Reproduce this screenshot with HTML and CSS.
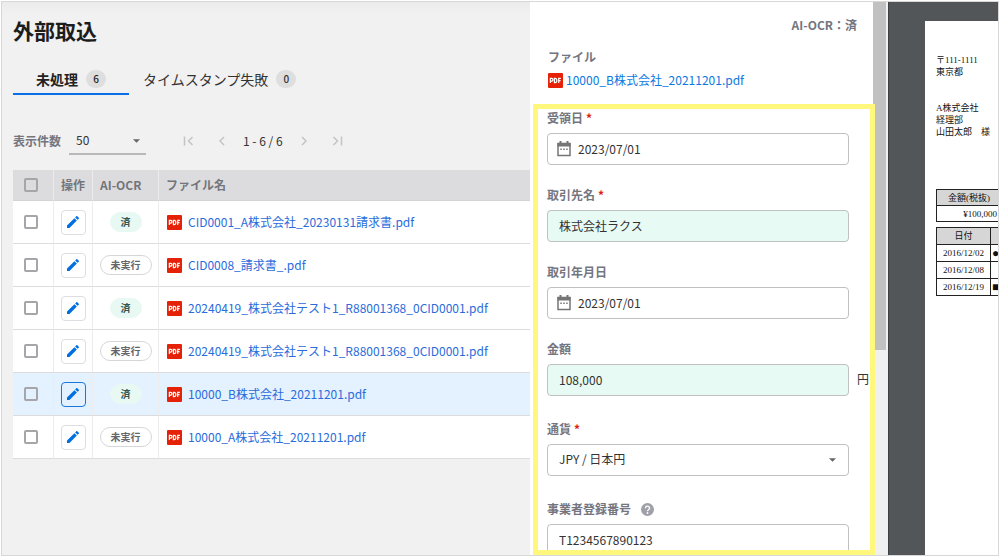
FILE: index.html
```html
<!DOCTYPE html>
<html lang="ja">
<head>
<meta charset="utf-8">
<title>外部取込</title>
<link rel="stylesheet" href="styles.css">
</head>
<body>
<svg class="defs" aria-hidden="true">
  <symbol id="pencil" viewBox="0 0 24 24"><path d="M3 17.2V21h3.8L17.800 9.900l-3.700-3.700L3 17.200zM20.700 7c.4-.4.4-1 0-1.400l-2.300-2.300c-.4-.4-1-.4-1.400 0l-1.800 1.800 3.700 3.700L20.700 7z"/></symbol>
  <symbol id="pdf" viewBox="0 0 14 14"><rect width="14" height="14" rx="1" fill="#e52207"/><path d="M2.200 9.300V5h1.200a1.200 1.200 0 0 1 0 2.500H2.200M6 5v4h.7a1.600 1.600 0 0 0 1.500-2A1.600 1.600 0 0 0 6.700 5zM10 9.300V5h2M10 7.100h1.700" fill="none" stroke="#fff" stroke-width="1.100"/></symbol>
  <symbol id="calendar" viewBox="0 0 16 16"><path d="M2 2.500h12v12H2z" fill="none" stroke="#757575" stroke-width="1.500"/><path d="M1.500 2h13v3.500h-13zM3.500 0h2v3h-2zM10.500 0h2v3h-2zM4.300 7.500h1.500v1.500H4.300zM7.200 7.500h1.500v1.500H7.200zM10.200 7.500h1.500v1.500h-1.500z" fill="#757575"/></symbol>
</svg>
<div class="app">
  <main class="list">
    <h1 class="title">外部取込</h1>
    <nav class="tabs">
      <button class="tab tab-active" type="button">未処理<span class="count">6</span></button>
      <button class="tab" type="button">タイムスタンプ失敗<span class="count">0</span></button>
    </nav>
    <div class="pager">
      <label class="caption" for="per-page">表示件数</label>
      <div class="select-box per-page">
        <select id="per-page"><option>50</option></select>
        <svg class="caret" viewBox="0 0 8 4"><path d="M0 0h8L4 4z"/></svg>
      </div>
      <div class="pages">
        <button class="page-btn" type="button" aria-label="最初"><svg viewBox="0 0 12 12"><path d="M1.500 1.500v9M9.500 2L5.500 6l4 4"/></svg></button>
        <button class="page-btn" type="button" aria-label="前"><svg viewBox="0 0 12 12"><path d="M8 2L4 6l4 4"/></svg></button>
        <span class="range">1 - 6 / 6</span>
        <button class="page-btn" type="button" aria-label="次"><svg viewBox="0 0 12 12"><path d="M4 2l4 4-4 4"/></svg></button>
        <button class="page-btn" type="button" aria-label="最後"><svg viewBox="0 0 12 12"><path d="M2.500 2l4 4-4 4M10.500 1.500v9"/></svg></button>
      </div>
    </div>
    <table class="files">
      <thead>
        <tr><th class="col-check"><input type="checkbox" aria-label="すべて選択"></th><th class="col-edit">操作</th><th class="col-ocr">AI-OCR</th><th>ファイル名</th></tr>
      </thead>
      <tbody>
        <tr>
          <td class="mid"><input type="checkbox" aria-label="選択"></td>
          <td class="mid"><button class="edit" type="button" aria-label="編集"><svg><use href="#pencil"/></svg></button></td>
          <td class="mid"><span class="pill pill-done">済</span></td>
          <td><a class="file" href="#"><svg><use href="#pdf"/></svg>CID0001_A株式会社_20230131請求書.pdf</a></td>
        </tr>
        <tr>
          <td class="mid"><input type="checkbox" aria-label="選択"></td>
          <td class="mid"><button class="edit" type="button" aria-label="編集"><svg><use href="#pencil"/></svg></button></td>
          <td class="mid"><span class="pill">未実行</span></td>
          <td><a class="file" href="#"><svg><use href="#pdf"/></svg>CID0008_請求書_.pdf</a></td>
        </tr>
        <tr>
          <td class="mid"><input type="checkbox" aria-label="選択"></td>
          <td class="mid"><button class="edit" type="button" aria-label="編集"><svg><use href="#pencil"/></svg></button></td>
          <td class="mid"><span class="pill pill-done">済</span></td>
          <td><a class="file" href="#"><svg><use href="#pdf"/></svg>20240419_株式会社テスト1_R88001368_0CID0001.pdf</a></td>
        </tr>
        <tr>
          <td class="mid"><input type="checkbox" aria-label="選択"></td>
          <td class="mid"><button class="edit" type="button" aria-label="編集"><svg><use href="#pencil"/></svg></button></td>
          <td class="mid"><span class="pill">未実行</span></td>
          <td><a class="file" href="#"><svg><use href="#pdf"/></svg>20240419_株式会社テスト1_R88001368_0CID0001.pdf</a></td>
        </tr>
        <tr class="selected">
          <td class="mid"><input type="checkbox" aria-label="選択"></td>
          <td class="mid"><button class="edit" type="button" aria-label="編集"><svg><use href="#pencil"/></svg></button></td>
          <td class="mid"><span class="pill pill-done">済</span></td>
          <td><a class="file" href="#"><svg><use href="#pdf"/></svg>10000_B株式会社_20211201.pdf</a></td>
        </tr>
        <tr>
          <td class="mid"><input type="checkbox" aria-label="選択"></td>
          <td class="mid"><button class="edit" type="button" aria-label="編集"><svg><use href="#pencil"/></svg></button></td>
          <td class="mid"><span class="pill">未実行</span></td>
          <td><a class="file" href="#"><svg><use href="#pdf"/></svg>10000_A株式会社_20211201.pdf</a></td>
        </tr>
      </tbody>
    </table>
  </main>

  <section class="panel">
    <div class="status caption">AI-OCR：済</div>
    <div class="source">
      <div class="caption">ファイル</div>
      <a class="file file-open" href="#"><svg><use href="#pdf"/></svg>10000_B株式会社_20211201.pdf</a>
    </div>
    <form class="form">
      <div class="field">
        <label class="caption" for="received">受領日<span class="required">*</span></label>
        <div class="control"><svg class="cal"><use href="#calendar"/></svg><input id="received" class="with-icon" type="text" value="2023/07/01"></div>
      </div>
      <div class="field">
        <label class="caption" for="partner">取引先名<span class="required">*</span></label>
        <div class="control"><input id="partner" class="read" type="text" value="株式会社ラクス"></div>
      </div>
      <div class="field">
        <label class="caption" for="date">取引年月日</label>
        <div class="control"><svg class="cal"><use href="#calendar"/></svg><input id="date" class="with-icon" type="text" value="2023/07/01"></div>
      </div>
      <div class="field">
        <label class="caption" for="amount">金額</label>
        <div class="control"><input id="amount" class="read" type="text" value="108,000"><span class="unit">円</span></div>
      </div>
      <div class="field spaced">
        <label class="caption" for="currency">通貨<span class="required">*</span></label>
        <div class="control select-box"><select id="currency"><option>JPY / 日本円</option></select><svg class="caret" viewBox="0 0 8 4"><path d="M0 0h8L4 4z"/></svg></div>
      </div>
      <div class="field spaced">
        <label class="caption" for="number">事業者登録番号<svg class="help" viewBox="0 0 13 13"><circle cx="6.500" cy="6.500" r="6.500" fill="#a0a1a8"/><path d="M4.500 5.200a2 2 0 1 1 3 1.600c-.7.500-1 .8-1 1.500" fill="none" stroke="#fff" stroke-width="1.300"/><circle cx="6.500" cy="10" r=".9" fill="#fff"/></svg></label>
        <div class="control"><input id="number" type="text" value="T1234567890123"></div>
      </div>
    </form>
  </section>
  <div class="scrollbar"><div class="thumb"></div></div>

  <aside class="viewer">
    <article class="sheet">
      <p>〒111-1111<br>東京都</p>
      <p class="addressee">A株式会社<br>経理部<br>山田太郎　様</p>
      <table class="bill total">
        <tr><th>金額(税抜)</th></tr>
        <tr><td>¥100,000</td></tr>
      </table>
      <table class="bill">
        <tr><th class="day">日付</th><th></th></tr>
        <tr><td>2016/12/02</td><td>●</td></tr>
        <tr><td>2016/12/08</td><td></td></tr>
        <tr><td>2016/12/19</td><td>■</td></tr>
      </table>
    </article>
  </aside>
</div>
</body>
</html>
```

FILE: styles.css
```css
* { box-sizing: border-box; }
body {
  margin: 0;
  padding: 1px;
  height: 100vh;
  font: 12px/18px "Noto Sans CJK JP", sans-serif;
  color: #333;
  background: #fff;
}
button, input, select { font: inherit; color: inherit; margin: 0; }
button { background: none; border: 0; padding: 0; }
h1, p { margin: 0; }
.defs { position: absolute; width: 0; height: 0; }

.app {
  display: grid;
  grid-template-columns: minmax(0, 1fr) 343px 15px 110px;
  grid-template-rows: minmax(0, 1fr);
  height: 100%;
  border: 1px solid #d8d8d8;
  overflow: hidden;
}
.caption { font-weight: 700; color: #74757f; }

/* File list */
.list {
  padding: 14px 0 0 11px;
  background: linear-gradient(#ebebec, #f1f1f1 12px);
  overflow: hidden;
}
.title { font-size: 21px; line-height: 28px; font-weight: 700; color: #1c1c1c; }
.tabs { display: flex; margin-top: 20px; }
.tab {
  display: flex;
  align-items: center;
  gap: 8px;
  height: 31px;
  padding: 0 14px;
  font-size: 14px;
  border-bottom: 2px solid transparent;
}
.tab-active { padding: 0 23px; font-weight: 700; color: #222; border-color: #0b6fe8; }
.count {
  width: 20px;
  border-radius: 9px;
  background: #dedede;
  font-size: 10px;
  font-weight: 500;
  text-align: center;
}
.pager { display: flex; align-items: center; margin-top: 32px; height: 28px; }
.select-box { position: relative; }
.select-box select { appearance: none; width: 100%; border-radius: 0; background: none; outline: 0; }
.caret { position: absolute; top: 50%; right: 6px; width: 7px; height: 4px; margin-top: -2px; fill: #666; }
.per-page { width: 77px; margin-left: 8px; }
.per-page select { height: 28px; padding: 0 7px; border: 0; border-bottom: 2px solid #b9b9b9; }
.pages { display: flex; align-items: center; margin-left: 26px; }
.page-btn { display: grid; place-items: center; width: 33px; height: 24px; }
.page-btn svg { width: 12px; height: 12px; fill: none; stroke: #c4c4c4; stroke-width: 1.5; }
.range { padding: 0 5px; white-space: nowrap; }

.files { width: 100%; margin-top: 15px; border-collapse: separate; border-spacing: 0; table-layout: fixed; background: #fff; }
.files th { height: 31px; padding: 0 7px; background: #dcdcde; color: #74757b; font-weight: 700; text-align: left; border-bottom: 1px solid #d4d4d6; }
.files td { height: 43px; padding: 0 8px; border-bottom: 1px solid #dcdcde; }
.files th + th, .files td + td { border-left: 1px solid #ececee; }
.files .col-check { width: 40px; padding: 0 11px; }
.files .col-edit { width: 39px; }
.files .col-ocr { width: 66px; }
.files .mid { padding: 0; text-align: center; }
.files .selected td { background: #e4f1fe; }
.files input {
  appearance: none;
  display: block;
  width: 14px;
  height: 14px;
  border: 2px solid #a5a5aa;
  border-radius: 2px;
}
.files .mid input { margin: 0 11px; }
.edit { display: grid; place-items: center; width: 25px; height: 25px; margin: 0 auto; border: 1px solid #dedee2; border-radius: 4px; background: #fff; }
.edit svg { width: 16px; height: 16px; fill: #0070e0; }
.selected .edit { border-color: #1a78dc; background: none; }
.pill {
  display: inline-block;
  padding: 0 10px;
  border: 1px solid #d6d6d8;
  border-radius: 11px;
  font-size: 10px;
  font-weight: 700;
  color: #65666c;
  vertical-align: middle;
}
.pill-done { border-color: #e8f9f3; background: #e8f9f3; color: #35544e; }
.file { display: flex; align-items: center; gap: 6px; color: #2a6cdb; text-decoration: none; white-space: nowrap; }
.file svg { width: 15px; height: 15px; flex: none; }

/* Detail panel */
.panel { display: flex; flex-direction: column; padding-top: 14px; background: #fff; }
.status { padding-right: 16px; text-align: right; }
.source { margin-top: 14px; padding-left: 18px; }
.file-open { margin-top: 5px; gap: 3px; color: #0b79e0; }
.form {
  position: relative;
  flex: 1;
  min-height: 0;
  margin: 15px -2px 0 3px;
  padding: 0 21px 0 9px;
  border: 5px solid #fff87c;
  overflow: hidden;
}
.field { margin-bottom: 21px; }
.spaced { margin-top: 24px; }
.field label { display: flex; align-items: center; }
.required { margin-left: 3px; color: #e02010; }
.help { width: 13px; height: 13px; margin-left: 10px; }
.control { position: relative; margin-top: 6px; }
.control input, .control select {
  display: block;
  width: 100%;
  height: 32px;
  padding: 0 11px 2px;
  border: 1px solid #bfc0c2;
  border-radius: 4px;
  background: #fff;
}
.control .with-icon { padding-left: 30px; }
.control .read { background: #e8faf4; }
.control .caret { right: 13px; }
.cal { position: absolute; top: 8px; left: 9px; width: 16px; height: 16px; }
.unit { position: absolute; top: 6px; left: 100%; margin-left: 8px; }

.scrollbar { background: #f0f0f0; }
.thumb { height: 63%; margin-right: 2px; background: #c1c1c1; }

/* Document preview */
.viewer { padding: 19px 0 0 36px; border-left: 1px solid #3c4043; background: #525659; overflow: hidden; }
.sheet {
  height: 100%;
  padding: 33px 0 0 11px;
  background: #fff;
  color: #111;
  font: 9px/12px "Liberation Serif", "Noto Sans CJK JP", serif;
  white-space: nowrap;
  overflow: hidden;
}
.addressee { margin-top: 24px; }
.bill { width: 82px; margin-top: 5px; border-collapse: collapse; table-layout: fixed; font-size: 9px; }
.total { width: 66px; margin-top: 51px; }
.bill th, .bill td { height: 17px; padding: 0 2px; border: 1px solid #222; font-weight: 400; text-align: center; line-height: 12px; }
.bill .day { width: 54px; }
.bill.total th, .bill.total td { height: 16px; }
.bill.total td { padding-right: 4px; text-align: right; }
.bill th { background: #d6d6d6; }
.bill td + td { padding: 0 1px; text-align: left; font-size: 12px; }
```
